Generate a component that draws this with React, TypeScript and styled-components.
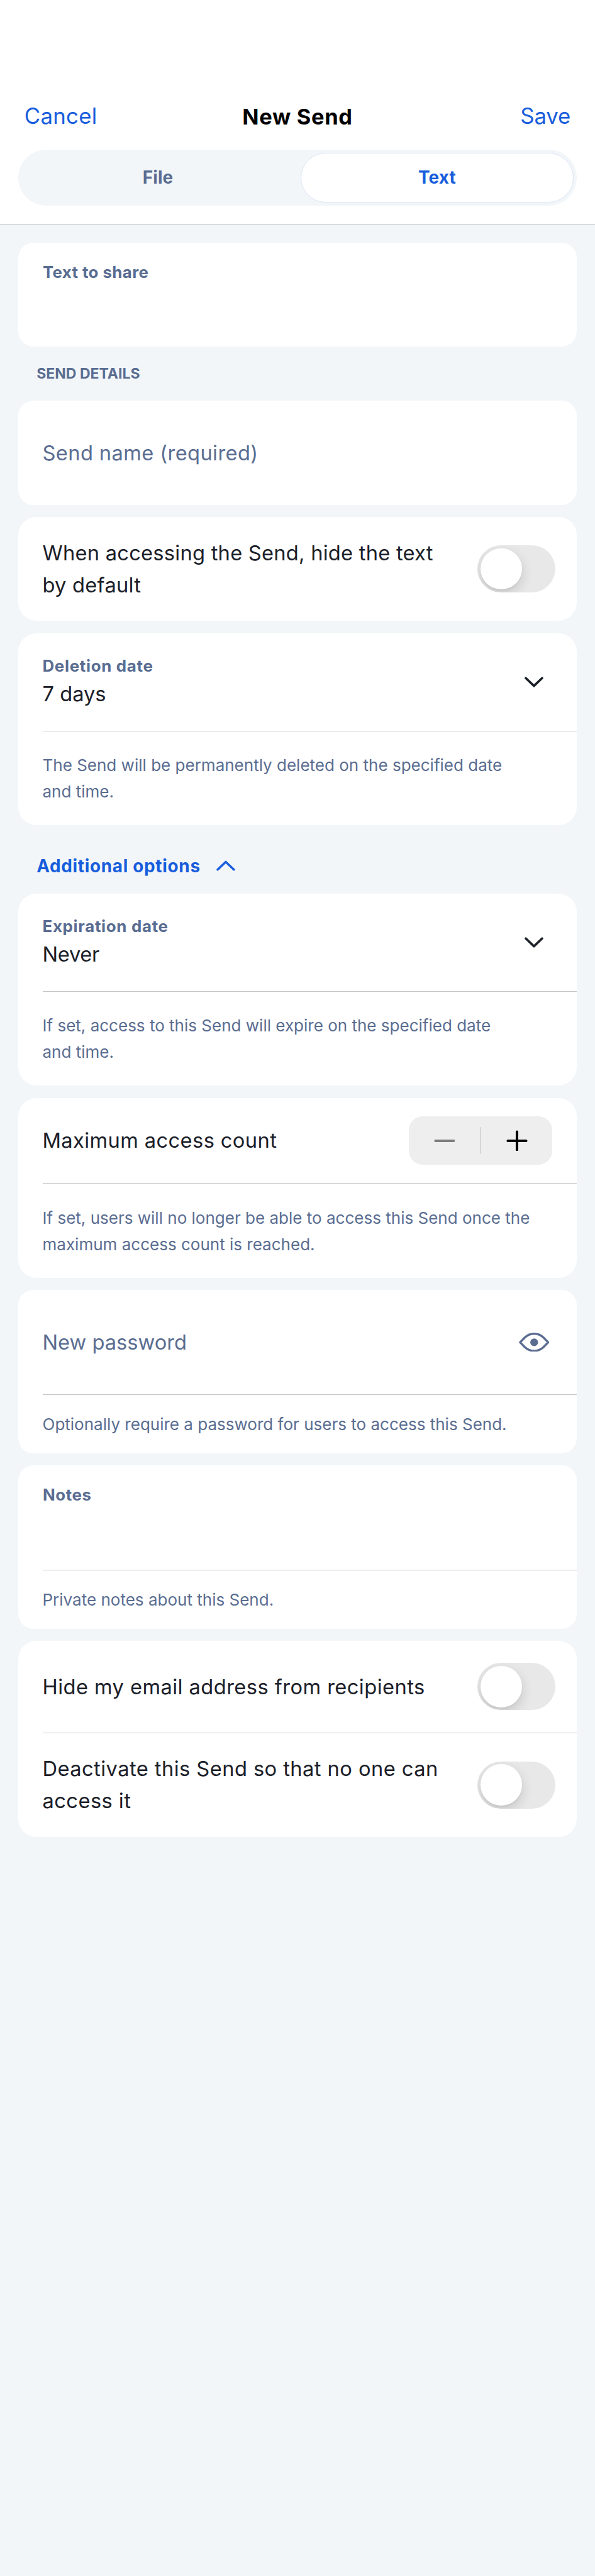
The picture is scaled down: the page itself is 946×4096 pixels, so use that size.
import React from 'react';
import styled, { createGlobalStyle } from 'styled-components';

/* Lengths are given on a 1170-unit wide grid and scaled to the page width. */
const u = (n: number) => `${((n * 946) / 1170).toFixed(3)}px`;

const color = {
  page: '#f2f6f9',
  surface: '#ffffff',
  text: '#1b2029',
  muted: '#5a6d91',
  accent: '#175ddc',
  line: '#c6c6c8',
};

const GlobalStyle = createGlobalStyle`
  * { box-sizing: border-box; }
  body {
    margin: 0;
    background: ${color.page};
    font-family: Inter, "Liberation Sans", sans-serif;
    color: ${color.text};
  }
  button { font: inherit; color: inherit; background: none; border: 0; padding: 0; margin: 0; }
`;

const Page = styled.div`
  width: 946px;
  min-height: 4096px;
  background: ${color.page};
`;

const Header = styled.header`
  height: ${u(441)};
  padding: ${u(169)} ${u(36)} 0;
  background: ${color.surface};
  border-bottom: 1px solid #c3c4c7;
`;

const NavBar = styled.nav`
  display: grid;
  grid-template-columns: 1fr auto 1fr;
  align-items: center;
  height: ${u(119)};
  padding: 0 ${u(12)};
`;

const NavAction = styled.button<{ $end?: boolean; $track: number }>`
  justify-self: ${(p) => (p.$end ? 'end' : 'start')};
  font-size: ${u(43)};
  line-height: ${u(60)};
  letter-spacing: ${(p) => p.$track}px;
  color: ${color.accent};
`;

const Title = styled.h1`
  margin: 0;
  padding-top: ${u(4)};
  font-size: ${u(42.6)};
  line-height: ${u(60)};
  font-weight: 700;
  letter-spacing: 0.7px;
  color: #000;
`;

const Segments = styled.div`
  display: grid;
  grid-template-columns: 1fr 1fr;
  height: ${u(110)};
  margin-top: ${u(6)};
  border-radius: ${u(55)};
  background: ${color.page};
`;

const Segment = styled.button<{ $selected?: boolean }>`
  margin: ${u(6)};
  border: 1.6px solid ${(p) => (p.$selected ? '#dbe5f6' : 'transparent')};
  border-radius: ${u(49)};
  background: ${(p) => (p.$selected ? color.surface : 'transparent')};
  color: ${(p) => (p.$selected ? color.accent : color.muted)};
  font-size: ${u(34.5)};
  font-weight: 700;
  letter-spacing: 0.15px;
`;

const Form = styled.main`
  display: flex;
  flex-direction: column;
  gap: ${u(24)};
  padding: ${u(36)} ${u(36)} 0;
`;

const Group = styled.section`
  display: flex;
  flex-direction: column;
`;

const Card = styled.div<{ $radius?: number }>`
  border-radius: ${(p) => u(p.$radius ?? 36)};
  background: ${color.surface};
`;

const Row = styled.div<{ $height: number }>`
  display: flex;
  align-items: center;
  justify-content: space-between;
  height: ${(p) => u(p.$height)};
  padding: 0 ${u(48)} 0 ${u(47.5)};
`;

const ToggleRow = styled(Row)`
  padding-right: ${u(42)};
`;

const TextArea = styled.div`
  height: ${u(205)};
  padding: ${u(34.5)} ${u(48)} 0 ${u(48)};
`;

const Divider = styled.hr`
  height: 1px;
  margin: 0 0 0 ${u(48)};
  border: 0;
  background: ${color.line};
`;

const Stack = styled.div`
  display: flex;
  flex-direction: column;
  padding-top: ${u(1)};
`;

const Label = styled.div<{ $track?: number }>`
  font-size: ${u(32)};
  line-height: ${u(47)};
  font-weight: 700;
  letter-spacing: ${(p) => p.$track ?? 0.6}px;
  color: ${color.muted};
`;

const Value = styled.div<{ $muted?: boolean; $track?: number }>`
  font-size: ${u(40.4)};
  line-height: ${u(62.7)};
  letter-spacing: ${(p) => p.$track ?? 0}px;
  white-space: nowrap;
  color: ${(p) => (p.$muted ? color.muted : color.text)};
`;

const Helper = styled.p<{ $height: number }>`
  display: flex;
  align-items: center;
  height: ${(p) => u(p.$height)};
  margin: 0;
  padding: ${u(1)} 0 0 ${u(47.5)};
  font-size: ${u(32.2)};
  line-height: ${u(51.7)};
  white-space: nowrap;
  color: ${color.muted};
`;

const SectionTitle = styled.h2`
  height: ${u(106)};
  margin: 0;
  padding: ${u(30)} 0 0 ${u(36)};
  font-size: ${u(28.5)};
  line-height: ${u(45)};
  font-weight: 700;
  color: ${color.muted};
`;

const Disclosure = styled.button`
  display: flex;
  align-items: center;
  gap: ${u(31)};
  height: ${u(134)};
  padding: ${u(26)} 0 0 ${u(36)};
  font-size: ${u(34.5)};
  font-weight: 700;
  letter-spacing: 0.7px;
  color: ${color.accent};
`;

const IconSlot = styled.span<{ $muted?: boolean }>`
  display: flex;
  align-items: center;
  justify-content: center;
  width: ${u(72)};
  height: ${u(72)};
  color: ${(p) => (p.$muted ? color.muted : color.text)};
`;

const Icon = styled.svg<{ $w: number; $h: number }>`
  display: block;
  width: ${(p) => u(p.$w)};
  height: ${(p) => u(p.$h)};
  fill: none;
  stroke: currentColor;
  stroke-linecap: round;
  stroke-linejoin: round;
`;

const Switch = styled.button`
  flex: none;
  width: ${u(153)};
  height: ${u(93)};
  padding: ${u(6)};
  border-radius: ${u(46.5)};
  background: #e8e8e8;
  overflow: hidden;
`;

const Knob = styled.span`
  display: block;
  width: ${u(81)};
  height: ${u(81)};
  border-radius: 50%;
  background: #fff;
  box-shadow: 0 ${u(9)} ${u(24)} rgba(0, 0, 0, 0.15), 0 ${u(3)} ${u(3)} rgba(0, 0, 0, 0.04);
`;

const Stepper = styled.div`
  display: grid;
  grid-template-columns: 1fr ${u(3)} 1fr;
  align-items: center;
  width: ${u(282)};
  height: ${u(96)};
  border-radius: ${u(27)};
  background: #eeeeee;
`;

const StepButton = styled.button<{ $disabled?: boolean }>`
  display: flex;
  align-items: center;
  justify-content: center;
  height: 100%;
  color: ${(p) => (p.$disabled ? '#7b7c7c' : '#000')};
`;

const StepDivider = styled.span`
  height: ${u(54)};
  border-radius: ${u(2)};
  background: #d6d6d6;
`;

const ChevronDown = () => (
  <Icon viewBox="0 0 37 21" $w={37} $h={21} strokeWidth={4.6}>
    <path d="M2.5 2.8 18.5 18 34.5 2.8" />
  </Icon>
);

const ChevronUp = () => (
  <Icon viewBox="0 0 37 21" $w={37} $h={21} strokeWidth={4.4}>
    <path d="M2.5 18.2 18.5 3 34.5 18.2" />
  </Icon>
);

const Eye = () => (
  <Icon viewBox="0 0 60 38" $w={60} $h={38} strokeWidth={4.3}>
    <path d="M2.4 19 12 9.3C22-.2 38-.2 48 9.3L57.6 19 48 28.7C38 38.2 22 38.2 12 28.7Z" />
    <circle cx="30" cy="19" r="7.6" fill="currentColor" stroke="none" />
  </Icon>
);

const Minus = () => (
  <Icon viewBox="0 0 42 42" $w={42} $h={42} strokeWidth={5}>
    <path d="M3 21H39" />
  </Icon>
);

const Plus = () => (
  <Icon viewBox="0 0 42 42" $w={42} $h={42} strokeWidth={5}>
    <path d="M3 21H39M21 3V39" />
  </Icon>
);

const Toggle = () => (
  <Switch role="switch" aria-checked={false}>
    <Knob />
  </Switch>
);

export default function App() {
  return (
    <Page>
      <GlobalStyle />
      <Header>
        <NavBar>
          <NavAction $track={0.3}>Cancel</NavAction>
          <Title>New Send</Title>
          <NavAction $end $track={-0.1}>Save</NavAction>
        </NavBar>
        <Segments>
          <Segment>File</Segment>
          <Segment $selected>Text</Segment>
        </Segments>
      </Header>

      <Form>
        <Group>
          <Card $radius={30}>
            <TextArea>
              <Label $track={0.4}>Text to share</Label>
            </TextArea>
          </Card>
          <SectionTitle>SEND DETAILS</SectionTitle>
          <Card $radius={30}>
            <Row $height={205}>
              <Value $muted $track={0.38}>Send name (required)</Value>
            </Row>
          </Card>
        </Group>

        <Card>
          <ToggleRow $height={204}>
            <Value $track={0.24}>
              When accessing the Send, hide the text
              <br />
              by default
            </Value>
            <Toggle />
          </ToggleRow>
        </Card>

        <Group>
          <Card>
            <Row $height={192}>
              <Stack>
                <Label $track={0.7}>Deletion date</Label>
                <Value>7 days</Value>
              </Stack>
              <IconSlot>
                <ChevronDown />
              </IconSlot>
            </Row>
            <Divider />
            <Helper $height={184.8}>
              The Send will be permanently deleted on the specified date
              <br />
              and time.
            </Helper>
          </Card>
          <Disclosure>
            Additional options
            <ChevronUp />
          </Disclosure>
          <Card>
            <Row $height={192}>
              <Stack>
                <Label $track={0.7}>Expiration date</Label>
                <Value $track={-0.3}>Never</Value>
              </Stack>
              <IconSlot>
                <ChevronDown />
              </IconSlot>
            </Row>
            <Divider />
            <Helper $height={184.8}>
              If set, access to this Send will expire on the specified date
              <br />
              and time.
            </Helper>
          </Card>
        </Group>

        <Card>
          <Row $height={168}>
            <Value $track={0.38}>Maximum access count</Value>
            <Stepper>
              <StepButton $disabled aria-label="Decrease">
                <Minus />
              </StepButton>
              <StepDivider />
              <StepButton aria-label="Increase">
                <Plus />
              </StepButton>
            </Stepper>
          </Row>
          <Divider />
          <Helper $height={184.8}>
            If set, users will no longer be able to access this Send once the
            <br />
            maximum access count is reached.
          </Helper>
        </Card>

        <Card $radius={30}>
          <Row $height={205}>
            <Value $muted>New password</Value>
            <IconSlot $muted>
              <Eye />
            </IconSlot>
          </Row>
          <Divider />
          <Helper $height={114.8}>
            Optionally require a password for users to access this Send.
          </Helper>
        </Card>

        <Card $radius={30}>
          <TextArea>
            <Label>Notes</Label>
          </TextArea>
          <Divider />
          <Helper $height={114.8}>Private notes about this Send.</Helper>
        </Card>

        <Card>
          <ToggleRow $height={180}>
            <Value $track={0.43}>Hide my email address from recipients</Value>
            <Toggle />
          </ToggleRow>
          <Divider />
          <ToggleRow $height={204}>
            <Value $track={0.43}>
              Deactivate this Send so that no one can
              <br />
              access it
            </Value>
            <Toggle />
          </ToggleRow>
        </Card>
      </Form>
    </Page>
  );
}
